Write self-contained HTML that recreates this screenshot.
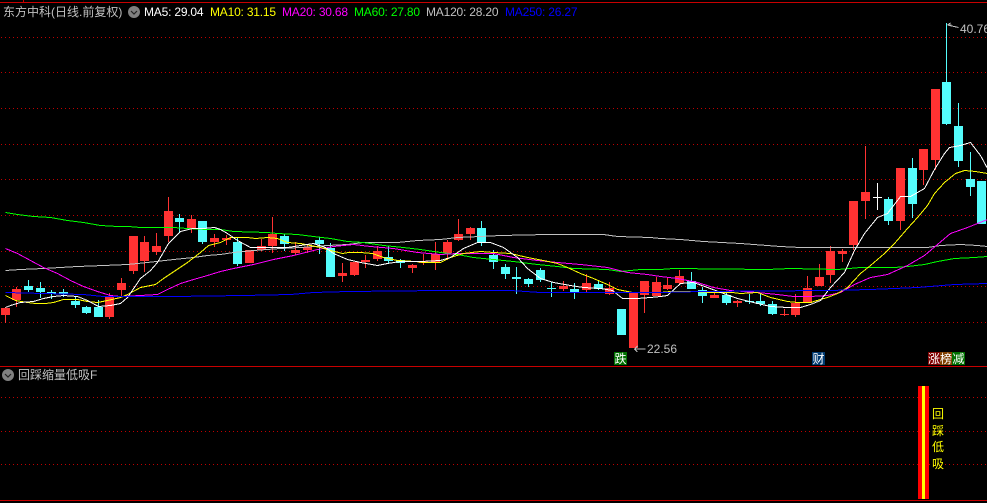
<!DOCTYPE html>
<html><head><meta charset="utf-8"><style>
html,body{margin:0;padding:0;background:#000;width:987px;height:503px;overflow:hidden}
#a{position:relative;width:987px;height:503px;background:#000;overflow:hidden}
svg{position:absolute;left:0;top:0}
.t{position:absolute;white-space:nowrap;font:12px/14px "Liberation Sans",sans-serif;color:#c0c0c0}
.m{letter-spacing:-.2px}
.c{font-family:"Liberation Sans","WenQuanYi Zen Hei","Noto Sans CJK SC",sans-serif}
.b{position:absolute;top:352px;height:13px;width:13px;font:12px/13px "WenQuanYi Zen Hei","Noto Sans CJK SC",sans-serif;color:#fff;text-align:center}
.y{position:absolute;left:932px;width:12px;font:12px/12px "WenQuanYi Zen Hei","Noto Sans CJK SC",sans-serif;color:#ff0;text-align:center}
polyline{fill:none;stroke-width:1}
</style></head><body><div id="a">
<svg width="987" height="503" viewBox="0 0 987 503">
<g stroke="#c00000" stroke-width="1" stroke-dasharray="1 3" shape-rendering="crispEdges">
<path d="M1 37.5H987M1 72.5H987M1 108.5H987M1 144.5H987M1 179.5H987M1 215.5H987M1 251.5H987M1 286.5H987M1 322.5H987M1 397.5H987M1 431.5H987M1 464.5H987"/>
</g>
<g fill="#c80000" shape-rendering="crispEdges">
<rect x="0" y="2" width="987" height="1"/><rect x="23" y="0" width="1" height="2"/>
<rect x="0" y="366" width="987" height="1"/><rect x="0" y="500" width="987" height="1"/>
</g>
<path fill="#ff3232" shape-rendering="crispEdges" d="M5 307h1V323h-1zM1 308h9V315h-9zM16 287h1V307h-1zM12 289h9V300h-9zM109 293h1V319h-1zM105 297h9V317h-9zM121 278h1V296h-1zM117 283h9V290h-9zM133 236h1V274h-1zM129 236h9V271h-9zM144 236h1V272h-1zM140 242h9V261h-9zM156 233h1V255h-1zM152 246h9V252h-9zM168 197h1V242h-1zM164 211h9V236h-9zM191 215h1V233h-1zM187 219h9V228h-9zM214 234h1V247h-1zM210 238h9V242h-9zM226 235h1V245h-1zM222 238h9V240h-9zM249 250h1V263h-1zM245 250h9V263h-9zM261 239h1V251h-1zM257 246h9V250h-9zM272 217h1V253h-1zM268 234h9V246h-9zM295 242h1V255h-1zM291 250h9V253h-9zM307 245h1V253h-1zM303 247h9V250h-9zM342 263h1V282h-1zM338 273h9V276h-9zM354 262h1V276h-1zM350 262h9V275h-9zM365 255h1V268h-1zM361 260h9V262h-9zM377 246h1V261h-1zM373 251h9V259h-9zM412 264h1V273h-1zM408 265h9V268h-9zM423 254h1V265h-1zM419 261h9V263h-9zM435 242h1V270h-1zM431 254h9V262h-9zM447 240h1V260h-1zM443 242h9V253h-9zM458 219h1V241h-1zM454 234h9V240h-9zM470 227h1V240h-1zM466 228h9V234h-9zM563 281h1V291h-1zM559 286h9V289h-9zM586 274h1V292h-1zM582 283h9V290h-9zM609 282h1V295h-1zM605 288h9V294h-9zM633 293h1V348h-1zM629 293h9V348h-9zM644 281h1V313h-1zM640 281h9V295h-9zM656 277h1V296h-1zM652 282h9V296h-9zM667 277h1V290h-1zM663 285h9V289h-9zM679 270h1V285h-1zM675 276h9V283h-9zM714 291h1V298h-1zM710 295h9V298h-9zM737 300h1V307h-1zM733 301h9V303h-9zM784 309h1V316h-1zM780 314h9V315h-9zM795 294h1V317h-1zM791 303h9V315h-9zM807 276h1V303h-1zM803 288h9V303h-9zM819 264h1V286h-1zM815 277h9V286h-9zM830 246h1V283h-1zM826 251h9V275h-9zM842 249h1V262h-1zM838 251h9V254h-9zM853 201h1V250h-1zM849 201h9V245h-9zM865 146h1V219h-1zM861 192h9V201h-9zM900 168h1V230h-1zM896 168h9V221h-9zM923 149h1V185h-1zM919 149h9V170h-9zM935 89h1V170h-1zM931 89h9V160h-9z"/>
<path fill="#54fcfc" shape-rendering="crispEdges" d="M28 280h1V292h-1zM24 286h9V290h-9zM40 282h1V298h-1zM36 288h9V292h-9zM51 290h1V299h-1zM47 292h9V294h-9zM63 289h1V297h-1zM59 292h9V294h-9zM75 297h1V308h-1zM71 301h9V305h-9zM86 306h1V314h-1zM82 307h9V313h-9zM98 300h1V317h-1zM94 307h9V317h-9zM179 214h1V232h-1zM175 218h9V222h-9zM202 221h1V244h-1zM198 221h9V242h-9zM237 237h1V266h-1zM233 242h9V264h-9zM284 234h1V251h-1zM280 236h9V244h-9zM319 237h1V254h-1zM315 240h9V244h-9zM330 243h1V277h-1zM326 248h9V277h-9zM388 246h1V264h-1zM384 257h9V261h-9zM400 259h1V268h-1zM396 260h9V263h-9zM481 221h1V246h-1zM477 228h9V243h-9zM493 250h1V269h-1zM489 255h9V262h-9zM505 264h1V279h-1zM501 267h9V274h-9zM516 267h1V294h-1zM512 277h9V279h-9zM528 278h1V287h-1zM524 279h9V284h-9zM540 268h1V282h-1zM536 270h9V280h-9zM551 282h1V297h-1zM547 288h9V289h-9zM574 283h1V299h-1zM570 289h9V293h-9zM598 281h1V290h-1zM594 284h9V289h-9zM621 309h1V335h-1zM617 309h9V335h-9zM691 272h1V289h-1zM687 281h9V289h-9zM702 287h1V303h-1zM698 290h9V296h-9zM726 292h1V305h-1zM722 295h9V303h-9zM749 294h1V304h-1zM745 301h9V302h-9zM760 294h1V306h-1zM756 301h9V304h-9zM772 301h1V315h-1zM768 304h9V314h-9zM888 197h1V225h-1zM884 199h9V221h-9zM912 158h1V218h-1zM908 168h9V204h-9zM946 23h1V125h-1zM942 82h9V124h-9zM958 103h1V167h-1zM954 126h9V161h-9zM970 152h1V196h-1zM966 179h9V187h-9zM981 181h1V224h-1zM977 181h9V224h-9z"/>
<path fill="#fff" shape-rendering="crispEdges" d="M877 183h1V210h-1zM873 197h9V198h-9z"/>
<g transform="translate(.5 .5)" shape-rendering="crispEdges">
<polyline stroke="#c0c0c0" points="5,270 20,269 43,268 77,266 103,265 127,264 147,262 173,259 193,257 207,255 220,254 233,252 253,250 280,248 300,247 327,245 347,244 363,242 397,242 417,240 440,239 457,237 480,236 500,235 547,234 603,234 617,236 650,237 660,238 680,239 703,241 740,243 780,246 800,247 927,247 940,245 960,244 977,245 987,246"/>
<polyline stroke="#00ff00" points="5,212 17,214 33,216 50,217 67,220 83,222 100,225 117,226 128,226 140,227 173,227 187,228 207,229 220,229 233,231 267,232 277,233 297,234 313,236 330,238 347,241 363,242 383,245 403,247 420,249 440,252 457,254 473,257 493,259 513,261 537,264 557,266 573,268 607,269 620,271 640,269 660,269 673,268 767,269 790,268 837,269 860,267 894,267 907,266 924,264 937,261 954,258 974,257 987,256"/>
<polyline stroke="#ff00ff" points="5,248 17,253 30,260 43,267 57,273 70,280 83,286 97,291 110,295 120,296 140,295 157,294 167,289 180,283 193,279 207,275 220,271 233,268 253,264 273,259 293,255 317,249 333,246 353,244 370,246 393,248 417,252 440,254 457,253 473,253 493,253 513,257 537,260 557,262 580,264 607,267 627,272 647,274 660,276 677,278 697,282 713,287 730,290 743,291 757,292 777,294 793,296 810,296 827,295 840,292 854,284 870,277 887,274 907,265 924,255 937,244 950,233 967,227 987,219"/>
<polyline stroke="#ffff00" points="5,295 15,300 27,302 35,303 45,303 53,302 63,299 77,299 87,301 97,302 107,300 120,297 127,294 140,287 155,284 163,278 175,270 187,262 200,252 208,245 220,242 230,237 240,237 247,237 255,238 267,237 277,238 287,242 300,243 310,245 320,247 330,250 342,253 348,252 360,252 372,253 383,257 397,260 415,261 423,262 440,262 450,257 463,253 480,251 493,252 510,253 527,257 543,260 557,263 567,267 580,273 593,278 607,284 617,289 627,291 632,292 660,292 670,291 693,291 710,292 732,292 740,293 757,292 770,297 787,301 797,302 810,302 820,299 827,297 837,293 847,287 860,273 870,265 884,253 894,243 907,228 917,217 927,205 934,193 944,182 955,173 964,170 975,171 987,173"/>
<polyline stroke="#ffffff" points="5,307 10,305 20,302 33,301 43,298 53,296 63,295 77,296 87,300 98,306 110,305 120,303 127,297 140,278 150,270 157,262 168,243 180,231 192,228 203,228 214,227 220,229 227,233 237,240 250,247 267,247 287,247 300,245 313,243 325,247 333,253 347,259 360,262 377,265 387,263 400,261 420,261 440,260 450,257 463,248 477,242 490,242 503,247 517,257 527,268 540,278 553,282 570,285 583,287 600,288 612,290 622,298 637,298 650,297 660,296 667,295 680,283 693,282 707,287 723,293 737,298 753,302 770,306 787,307 800,307 810,304 820,300 830,287 844,272 854,250 864,233 877,217 887,213 900,196 910,196 924,188 934,169 944,153 949,147 960,145 970,142 980,155 987,168"/>
<polyline stroke="#0000ff" points="5,292 43,293 83,294 103,296 173,296 243,295 290,294 313,292 348,291 440,290 510,290 540,292 660,292 700,291 827,290 870,289 917,287 954,284 987,283"/>
<path stroke="#c0c0c0" fill="none" d="M634 348.5H645M634 348.5L637 345.500M634 348.500L637 351.500M947 24.500L958 27M947 24.500L950 22.500M947 24.500H951"/>
</g>
<circle cx="134" cy="12" r="6" fill="#808080"/>
<path d="M131 11l3 3 3-3" fill="none" stroke="#222" stroke-width="1.200"/>
<circle cx="8" cy="375" r="6" fill="#808080"/>
<path d="M5 374l3 3 3-3" fill="none" stroke="#222" stroke-width="1.200"/>
<rect x="918" y="386" width="11" height="113" fill="#ff0000" shape-rendering="crispEdges"/>
<rect x="922" y="386" width="3" height="113" fill="#ffff00" shape-rendering="crispEdges"/>
</svg>
<span class="t c" style="left:3px;top:5px">东方中科(日线.前复权)</span>
<span class="t m" style="left:144px;top:5px;color:#fff">MA5: 29.04</span>
<span class="t m" style="left:210px;top:5px;color:#ff0">MA10: 31.15</span>
<span class="t m" style="left:282px;top:5px;color:#f0f">MA20: 30.68</span>
<span class="t m" style="left:354px;top:5px;color:#0f0">MA60: 27.80</span>
<span class="t m" style="left:426px;top:5px;color:#c0c0c0">MA120: 28.20</span>
<span class="t m" style="left:505px;top:5px;color:#00f">MA250: 26.27</span>
<span class="t" style="left:647px;top:342px">22.56</span>
<span class="t" style="left:960px;top:22px">40.76</span>
<span class="t c" style="left:18px;top:368px">回踩缩量低吸F</span>
<div class="b" style="left:614px;background:#007000">跌</div>
<div class="b" style="left:812px;background:#003a70">财</div>
<div class="b" style="left:928px;width:12px;background:#800000">涨</div>
<div class="b" style="left:940px;width:12px;background:#804000">榜</div>
<div class="b" style="left:952px;background:#007000">减</div>
<div class="y" style="top:408px">回</div>
<div class="y" style="top:425px">踩</div>
<div class="y" style="top:441px">低</div>
<div class="y" style="top:458px">吸</div>
</div></body></html>
